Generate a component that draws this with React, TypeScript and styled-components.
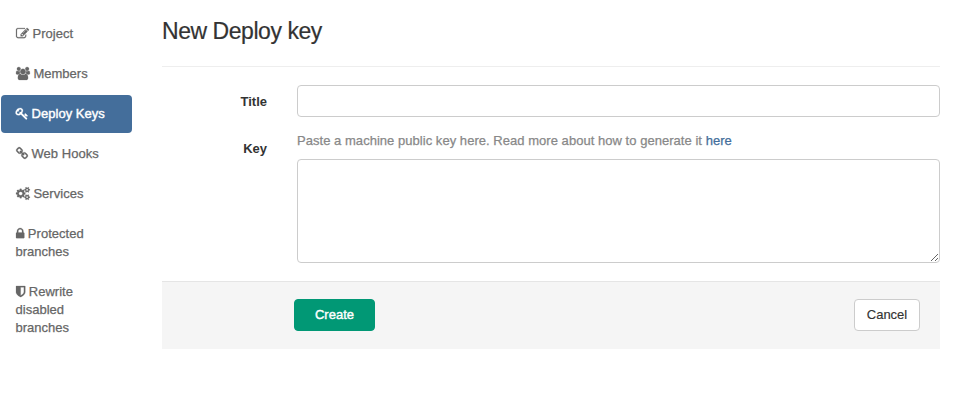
import React from 'react';
import styled, { createGlobalStyle } from 'styled-components';

const Global = createGlobalStyle`
  * { box-sizing: border-box; }
  body {
    margin: 0;
    background: #fff;
    color: #333;
    font: 13px/18px "Helvetica Neue", "Liberation Sans", Arial, sans-serif;
  }
`;

const Page = styled.div`
  display: flex;
  align-items: flex-start;
  height: 411px;
  overflow: hidden;
`;

const Sidebar = styled.nav`
  display: flex;
  flex-direction: column;
  gap: 2px;
  width: 131px;
  margin: 15px 30px 0 1px;
`;

const NavLink = styled.a<{ $active?: boolean; $narrow?: boolean }>`
  display: block;
  padding: 10px ${(p) => (p.$narrow ? 40 : 14)}px 10px 14.5px;
  border-radius: 4px;
  background: ${(p) => (p.$active ? '#446e9b' : 'transparent')};
  color: ${(p) => (p.$active ? '#fff' : '#666')};
  -webkit-text-stroke: ${(p) => (p.$active ? '0.4px' : '0.25px')} currentColor;
  letter-spacing: 0.02px;
  text-decoration: none;
`;

const Glyph = styled.svg`
  height: 13px;
  margin-right: 4px;
  vertical-align: -1.86px;
  fill: currentColor;
  stroke: currentColor;
  stroke-width: 30;
  overflow: visible;
`;

const Content = styled.main`
  width: 778px;
`;

const Heading = styled.h3`
  margin: 0;
  padding: 18px 0 21px;
  border-bottom: 1px solid #eee;
  color: #333;
  font-size: 23px;
  font-weight: 400;
  line-height: 27px;
  letter-spacing: -0.45px;
  -webkit-text-stroke: 0.2px currentColor;
`;

const FormRow = styled.div<{ $gap: number }>`
  display: grid;
  grid-template-columns: 105px 643px;
  column-gap: 30px;
  margin-top: ${(p) => p.$gap}px;
`;

const Label = styled.label`
  padding-top: 8px;
  font-weight: 700;
  text-align: right;
`;

const TextInput = styled.input`
  display: block;
  width: 100%;
  height: 32px;
  padding: 6px 10px;
  border: 1px solid #ccc;
  border-radius: 4px;
  background: #fff;
  font: inherit;
  outline: none;
`;

const KeyInput = styled.textarea`
  display: block;
  width: 100%;
  height: 104px;
  padding: 6px 10px;
  border: 1px solid #ccc;
  border-radius: 4px;
  background: #fff;
  font: inherit;
  outline: none;
  resize: vertical;
`;

const Hint = styled.p`
  margin: 0 0 9px;
  color: #888;
  letter-spacing: 0.037px;
  -webkit-text-stroke: 0.25px currentColor;
`;

const HintLink = styled.a`
  color: #446e9b;
  text-decoration: none;
`;

const Actions = styled.div`
  display: flex;
  justify-content: space-between;
  height: 68px;
  margin-top: 18px;
  padding: 17px 20px 0 132px;
  border-top: 1px solid #e5e5e5;
  background: #f5f5f5;
`;

const Button = styled.button<{ $primary?: boolean }>`
  width: ${(p) => (p.$primary ? 81 : 66)}px;
  height: 32px;
  padding: 0;
  border: 1px solid ${(p) => (p.$primary ? '#019875' : '#ccc')};
  border-radius: 4px;
  background: ${(p) => (p.$primary ? '#019875' : '#fff')};
  color: ${(p) => (p.$primary ? '#fff' : '#333')};
  -webkit-text-stroke: ${(p) => (p.$primary ? '0.4px' : '0.15px')} currentColor;
  font: inherit;
`;

interface NavItem {
  text: string;
  viewBox: string;
  path: string;
  active?: boolean;
  narrow?: boolean;
}

const navItems: NavItem[] = [
  {
    text: 'Project',
    viewBox: '0 0 1792 1792',
    path: 'M888 1184l116-116-152-152-116 116v56h96v96h56zm440-720q-16-16-33 1l-350 350q-17 17-1 33t33-1l350-350q17-17 1-33zm80 594v190q0 119-84.5 203.5t-203.5 84.5h-832q-119 0-203.5-84.5t-84.5-203.5v-832q0-119 84.5-203.5t203.5-84.5h832q63 0 117 25 15 7 18 23 3 17-9 29l-49 49q-14 14-32 8-23-6-45-6h-832q-66 0-113 47t-47 113v832q0 66 47 113t113 47h832q66 0 113-47t47-113v-126q0-13 9-22l64-64q15-15 35-7t20 29zm-96-738l288 288-672 672h-288v-288zm444 132l-92 92-288-288 92-92q28-28 68-28t68 28l152 152q28 28 28 68t-28 68z',
  },
  {
    text: 'Members',
    viewBox: '-64 0 1920 1792',
    path: 'M529 896q-162 5-265 128h-134q-82 0-138-40.5t-56-118.5q0-353 124-353 6 0 43.5 21t97.5 42.5 119 21.5q67 0 133-23-5 37-5 66 0 139 81 256zm1071 637q0 120-73 189.5t-194 69.5h-874q-121 0-194-69.5t-73-189.5q0-53 3.5-103.5t14-109 26.5-108.5 43-97.5 62-81 85.5-53.5 111.5-20q10 0 43 21.5t73 48 107 48 135 21.5 135-21.5 107-48 73-48 43-21.5q61 0 111.5 20t85.5 53.5 62 81 43 97.5 26.5 108.5 14 109 3.5 103.5zm-1024-1277q0 106-75 181t-181 75-181-75-75-181 75-181 181-75 181 75 75 181zm704 384q0 159-112.5 271.5t-271.5 112.5-271.5-112.5-112.5-271.5 112.5-271.5 271.5-112.5 271.5 112.5 112.5 271.5zm576 225q0 78-56 118.5t-138 40.5h-134q-103-123-265-128 81-117 81-256 0-29-5-66 66 23 133 23 59 0 119-21.5t97.5-42.5 43.5-21q124 0 124 353zm-128-609q0 106-75 181t-181 75-181-75-75-181 75-181 181-75 181 75 75 181z',
  },
  {
    text: 'Deploy Keys',
    viewBox: '64 0 1664 1792',
    active: true,
    path: 'M832 512q0-80-56-136t-136-56-136 56-56 136q0 42 19 83-41-19-83-19-80 0-136 56t-56 136 56 136 136 56 136-56 56-136q0-42-19-83 41 19 83 19 80 0 136-56t56-136zm851 704q0 17-49 66t-66 49q-9 0-28.5-16t-36.5-33-38.5-40-24.5-26l-96 96 220 220q28 28 28 68 0 42-39 81t-81 39q-40 0-68-28l-671-671q-176 131-365 131-163 0-265.5-102.5t-102.5-265.5q0-160 95-313t248-248 313-95q163 0 265.5 102.5t102.5 265.5q0 189-131 365l355 355 96-96q-3-3-26-24.5t-40-38.5-33-36.5-16-28.5q0-17 49-66t66-49q13 0 23 10 6 6 46 44.5t82 79.5 86.5 86 73 78 28.5 41z',
  },
  {
    text: 'Web Hooks',
    viewBox: '64 0 1664 1792',
    path: 'M1520 1216q0-40-28-68l-208-208q-28-28-68-28-42 0-72 32 3 3 19 18.5t21.5 21.5 15 19 13 25.5 3.5 27.5q0 40-28 68t-68 28q-15 0-27.5-3.5t-25.5-13-19-15-21.5-21.5-18.5-19q-33 31-33 73 0 40 28 68l206 207q27 27 68 27 40 0 68-26l147-146q28-28 28-67zm-703-705q0-40-28-68l-206-207q-28-28-68-28-39 0-68 27l-147 146q-28 28-28 67 0 40 28 68l208 208q27 27 68 27 42 0 72-31-3-3-19-18.5t-21.5-21.5-15-19-13-25.5-3.5-27.5q0-40 28-68t68-28q15 0 27.5 3.5t25.5 13 19 15 21.5 21.5 18.5 19q33-31 33-73zm895 705q0 120-85 203l-147 146q-83 83-203 83-121 0-204-85l-206-207q-83-83-83-203 0-123 88-209l-88-88q-86 88-208 88-120 0-204-84l-208-208q-84-84-84-204t85-203l147-146q83-83 203-83 121 0 204 85l206 207q83 83 83 203 0 123-88 209l88 88q86-88 208-88 120 0 204 84l208 208q84 84 84 204z',
  },
  {
    text: 'Services',
    viewBox: '-64 0 1920 1792',
    path: 'M832 896q0-106-75-181t-181-75-181 75-75 181 75 181 181 75 181-75 75-181zm768 512q0-52-38-90t-90-38-90 38-38 90q0 53 37.5 90.5t90.5 37.5 90.5-37.5 37.5-90.5zm0-1024q0-52-38-90t-90-38-90 38-38 90q0 53 37.5 90.5t90.5 37.5 90.5-37.5 37.5-90.5zm-384 421v185q0 10-7 19.5t-16 10.5l-155 24q-11 35-32 76 34 48 90 115 7 11 7 20 0 12-7 19-23 30-82.5 89.5t-78.5 59.5q-11 0-21-7l-115-90q-37 19-77 31-11 108-23 155-7 24-30 24h-186q-11 0-20-7.5t-10-17.5l-23-153q-34-10-75-31l-118 89q-7 7-20 7-11 0-21-8-144-133-144-160 0-9 7-19 10-14 41-53t47-61q-23-44-35-82l-152-24q-10-1-17-9.5t-7-19.5v-185q0-10 7-19.5t16-10.5l155-24q11-35 32-76-34-48-90-115-7-11-7-20 0-12 7-20 22-30 82-89t79-59q11 0 21 7l115 90q34-18 77-32 11-108 23-154 7-24 30-24h186q11 0 20 7.5t10 17.5l23 153q34 10 75 31l118-89q8-7 20-7 11 0 21 8 144 133 144 160 0 8-7 19-12 16-42 54t-45 60q23 48 34 82l152 23q10 2 17 10.5t7 19.5zm640 533v140q0 16-149 31-12 27-30 52 51 113 51 138 0 4-4 7-122 71-124 71-8 0-46-47t-52-68q-20 2-30 2t-30-2q-14 21-52 68t-46 47q-2 0-124-71-4-3-4-7 0-25 51-138-18-25-30-52-149-15-149-31v-140q0-16 149-31 13-29 30-52-51-113-51-138 0-4 4-7 4-2 35-20t59-34 30-16q8 0 46 46.5t52 67.5q20-2 30-2t30 2q51-71 92-112l6-2q4 0 124 70 4 3 4 7 0 25-51 138 17 23 30 52 149 15 149 31zm0-1024v140q0 16-149 31-12 27-30 52 51 113 51 138 0 4-4 7-122 71-124 71-8 0-46-47t-52-68q-20 2-30 2t-30-2q-14 21-52 68t-46 47q-2 0-124-71-4-3-4-7 0-25 51-138-18-25-30-52-149-15-149-31v-140q0-16 149-31 13-29 30-52-51-113-51-138 0-4 4-7 4-2 35-20t59-34 30-16q8 0 46 46.5t52 67.5q20-2 30-2t30 2q51-71 92-112l6-2q4 0 124 70 4 3 4 7 0 25-51 138 17 23 30 52 149 15 149 31z',
  },
  {
    text: 'Protected branches',
    viewBox: '320 0 1152 1792',
    narrow: true,
    path: 'M640 768h512v-192q0-106-75-181t-181-75-181 75-75 181v192zm832 96v576q0 40-28 68t-68 28h-960q-40 0-68-28t-28-68v-576q0-40 28-68t68-28h32v-192q0-184 132-316t316-132 316 132 132 316v192h32q40 0 68 28t28 68z',
  },
  {
    text: 'Rewrite disabled branches',
    viewBox: '256 0 1280 1792',
    narrow: true,
    path: 'M1344 960v-640h-448v1137q119-63 213-137 235-184 235-360zm192-768v768q0 86-33.5 170.5t-83 150-118 127.5-126.5 103-121 77.5-89.5 49.5-42.5 20q-12 6-26 6t-26-6q-16-7-42.5-20t-89.5-49.5-121-77.5-126.5-103-118-127.5-83-150-33.5-170.5v-768q0-26 19-45t45-19h1152q26 0 45 19t19 45z',
  },
];

export default function App() {
  return (
    <Page>
      <Global />
      <Sidebar>
        {navItems.map((item) => (
          <NavLink key={item.text} $active={item.active} $narrow={item.narrow}>
            <Glyph viewBox={item.viewBox} aria-hidden="true">
              <path d={item.path} />
            </Glyph>
            {item.text}
          </NavLink>
        ))}
      </Sidebar>
      <Content>
        <Heading>New Deploy key</Heading>
        <FormRow $gap={18}>
          <Label htmlFor="title">Title</Label>
          <TextInput id="title" />
        </FormRow>
        <FormRow $gap={15}>
          <Label htmlFor="key">Key</Label>
          <div>
            <Hint>
              Paste a machine public key here. Read more about how to generate it <HintLink>here</HintLink>
            </Hint>
            <KeyInput id="key" />
          </div>
        </FormRow>
        <Actions>
          <Button $primary>Create</Button>
          <Button>Cancel</Button>
        </Actions>
      </Content>
    </Page>
  );
}
